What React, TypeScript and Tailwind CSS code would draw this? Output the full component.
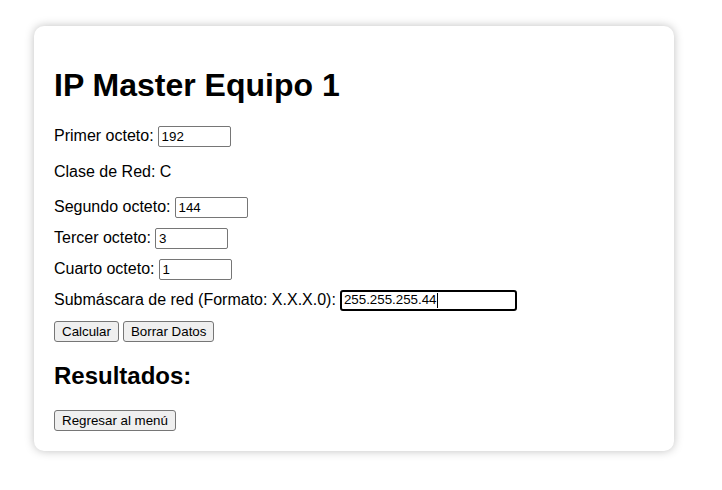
const octetos = [
  { label: "Segundo octeto:", value: "144" },
  { label: "Tercer octeto:", value: "3" },
  { label: "Cuarto octeto:", value: "1" },
];

const inputClass =
  "h-[21px] w-[73px] rounded-[2px] border border-[#767676] bg-white px-[3px] align-middle text-[13.33px] text-black outline-none";

const buttonClass =
  "h-[21px] rounded-[3px] border border-[#767676] bg-[#efefef] px-[7px] align-middle text-[13.33px] leading-none text-black";

export default function App() {
  return (
    <div className="min-h-[490px] bg-white pl-[34px] pt-[26px] font-['Liberation_Sans',Arial,sans-serif] text-base text-black">
      <div className="w-[640px] rounded-[10px] bg-white p-5 shadow-[0_0_10px_rgba(0,0,0,0.25)]">
        <h1 className="my-[21.44px] text-[32px] font-bold leading-[37px]">IP Master Equipo 1</h1>

        <div className="flex h-[21px] items-center gap-1">
          <span>Primer octeto:</span>
          <input className={inputClass} defaultValue="192" />
        </div>

        <p className="my-4 leading-[18px]">Clase de Red: C</p>

        <div className="flex flex-col gap-[10px]">
          {octetos.map((o) => (
            <div key={o.label} className="flex h-[21px] items-center gap-1">
              <span>{o.label}</span>
              <input className={inputClass} defaultValue={o.value} />
            </div>
          ))}
          <div className="flex h-[21px] items-center gap-1">
            <span>Submáscara de red (Formato: X.X.X.0):</span>
            <div className="flex h-[21px] w-[177px] items-center rounded-[3px] border-2 border-black bg-white px-[2px] text-[13.33px] text-black">
              <span>255.255.255.44</span>
              <span className="h-[15px] w-px bg-black" />
            </div>
          </div>
          <div className="flex h-[21px] items-center gap-1">
            <button className={buttonClass}>Calcular</button>
            <button className={buttonClass}>Borrar Datos</button>
          </div>
        </div>

        <h2 className="my-[19.92px] text-2xl font-bold leading-7">Resultados:</h2>

        <div className="flex h-[21px] items-center">
          <button className={buttonClass}>Regresar al menú</button>
        </div>
      </div>
    </div>
  );
}
